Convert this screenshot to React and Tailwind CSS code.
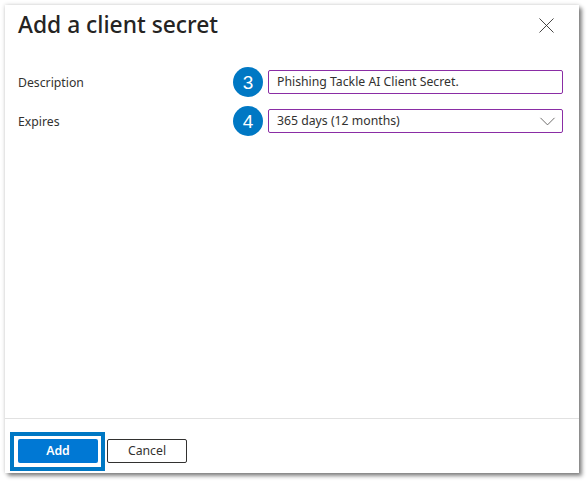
import React from "react";
import { X, ChevronDown } from "lucide-react";

const font = "font-['Noto_Sans','Open_Sans',sans-serif]";

const Badge = ({ value }) => (
  <span className="absolute left-[-36px] top-1/2 flex h-[30px] w-[30px] -translate-y-1/2 items-center justify-center rounded-full bg-[#0078c4] text-[19px] leading-none text-white font-['Liberation_Sans',sans-serif]">
    {value}
  </span>
);

const Row = ({ label, value, badge, select }) => (
  <div className="flex items-center">
    <div className="w-[250px] pt-[2px] text-[12.25px] text-[#323130]">{label}</div>
    <div className="relative flex h-[24px] w-[295px] items-center justify-between rounded-[2px] border-[1.5px] border-[#8a2da5] pl-[8px] pr-[1px] text-[12.25px] text-[#323130]">
      <Badge value={badge} />
      <span className="pt-[1px]">{value}</span>
      {select && <ChevronDown className="h-[27px] w-[27px] shrink-0 text-[#605e5c]" strokeWidth={0.8} />}
    </div>
  </div>
);

const App = () => {
  return (
    <div className={`h-[482px] w-[587px] bg-white pl-[5px] pt-[5px] ${font}`}>
      <div className="flex h-[468px] w-[574px] flex-col bg-white shadow-[3px_3px_4px_rgba(0,0,0,0.45),0_0_4px_rgba(0,0,0,0.2)]">
        <div className="flex h-[40px] items-center justify-between pl-[13px] pr-[19px]">
          <h1 className="text-[22.8px] font-medium leading-none text-[#252423]">Add a client secret</h1>
          <X className="h-[27px] w-[27px] text-[#323130]" strokeWidth={0.8} />
        </div>
        <div className="flex flex-1 flex-col gap-[15px] pl-[13px] pt-[25px]">
          <Row label="Description" value="Phishing Tackle AI Client Secret." badge="3" />
          <Row label="Expires" value="365 days (12 months)" badge="4" select />
        </div>
        <div className="flex h-[55px] items-start gap-[9px] border-t border-[#e1e1e1] pl-[13px] pt-[20px]">
          <div className="relative flex">
            <button className="h-[24px] w-[80px] rounded-[2px] bg-[#0078d4] text-[12.25px] font-semibold text-white">Add</button>
            <span className="absolute left-[-8px] top-[-7px] h-[39px] w-[95px] border-[4px] border-[#0078c4]" />
          </div>
          <button className="h-[24px] w-[80px] rounded-[2px] border border-[#323130] bg-white text-[12.25px] text-[#323130]">Cancel</button>
        </div>
      </div>
    </div>
  );
};

export default App;
